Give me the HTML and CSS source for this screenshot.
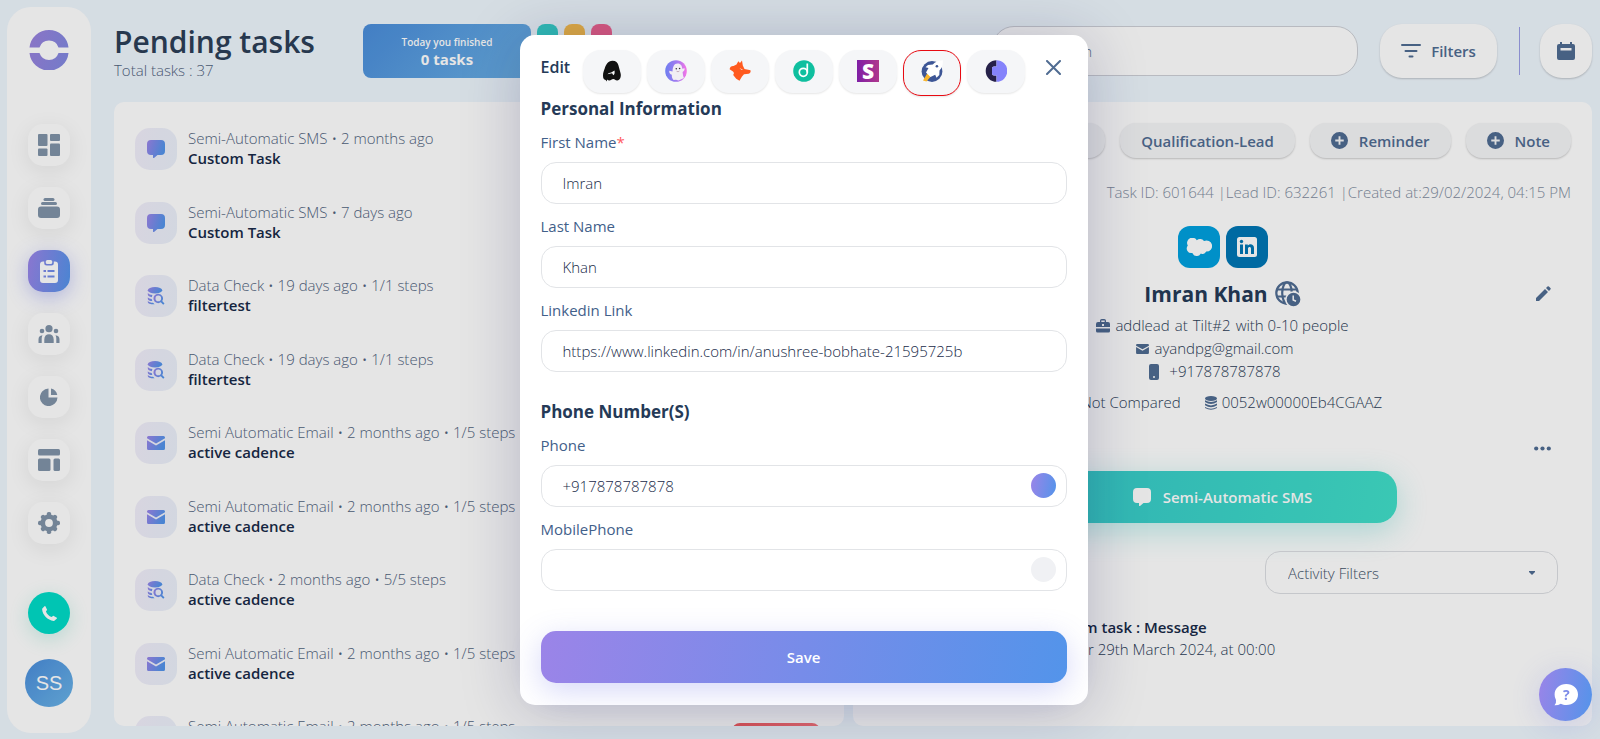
FILE: index.html
```html
<!DOCTYPE html>
<html lang="en">

<head>
  <title>Pending tasks</title>
  <meta charset="utf-8">
  <meta name="viewport" content="width=device-width, initial-scale=1">
  <link rel="stylesheet" href="styles.css">
</head>

<body>
  <!-- shared icons -->
  <svg class="sprite" width="0" height="0" aria-hidden="true">
    <defs>
      <linearGradient id="purple" x1="0" y1="0" x2="1" y2="0.3">
        <stop offset="0" stop-color="#9b84e8" />
        <stop offset="1" stop-color="#5394ea" />
      </linearGradient>
      <linearGradient id="ring" x1="0" y1="0" x2="1" y2="0.3">
        <stop offset="0" stop-color="#9b82dd" />
        <stop offset="1" stop-color="#8488e0" />
      </linearGradient>
      <symbol id="i-chat" viewBox="0 0 18 18">
        <path d="M4 0h10a4 4 0 0 1 4 4v7a4 4 0 0 1-4 4h-3.500L7 18q-1 .4-1-.8V15H4a4 4 0 0 1-4-4V4a4 4 0 0 1 4-4z" />
      </symbol>
      <symbol id="i-mail" viewBox="0 0 18 14">
        <path d="M1.500 0h15A1.500 1.500 0 0 1 18 1.500v.8L9 7.500 0 2.300v-.8A1.500 1.500 0 0 1 1.500 0zM0 4.300l9 5.200 9-5.200v8.200a1.500 1.500 0 0 1-1.500 1.500h-15A1.500 1.500 0 0 1 0 12.500z" />
      </symbol>
      <symbol id="i-data" viewBox="0 0 18 18">
        <ellipse cx="8" cy="3.200" rx="7.200" ry="3.200" />
        <path d="M.8 6c1 1.200 2.600 1.800 4.600 2.100l-.6 2.100C2.600 9.900.8 9 .8 7.600zM.8 10.200c.9 1 2.300 1.600 3.900 1.800l.6 2.100C2.700 14 .8 13 .8 11.700zM.8 14c1.200 1.200 3 1.700 5.200 1.800l1.600 1.500C3.800 17.400.8 16.700.8 15z" />
        <path fill-rule="evenodd" d="M11.300 6.700a4.700 4.700 0 0 1 3.900 7.300l2.300 2.400-1.300 1.300-2.400-2.400a4.700 4.700 0 1 1-2.500-8.600zm0 1.900a2.800 2.800 0 1 0 0 5.600 2.800 2.800 0 0 0 0-5.600z" />
      </symbol>
      <symbol id="i-plus" viewBox="0 0 18 18">
        <path fill-rule="evenodd" d="M9 0a9 9 0 1 1 0 18A9 9 0 0 1 9 0zM8 4.500V8H4.500v2H8v3.500h2V10h3.500V8H10V4.500z" />
      </symbol>
    </defs>
  </svg>

  <div class="app">
    <nav class="sidebar">
      <svg class="logo" viewBox="0 0 40 40">
        <path d="M.5 18a19.600 19.600 0 0 1 39 0H29.500a10 10 0 0 0-19 0zM.5 23.500h10a10 10 0 0 0 19 0h10a19.600 19.600 0 0 1-39 0z" />
      </svg>
      <ul class="menu">
        <li><a class="menu-item" href="#" aria-label="Dashboard"><svg width="22" height="22" viewBox="0 0 22 22">
              <rect width="9.500" height="12" rx="1" />
              <rect x="12" width="10" height="7" rx="1" />
              <rect y="14.500" width="9.500" height="7.500" rx="1" />
              <rect x="12" y="9.500" width="10" height="12.500" rx="1" />
            </svg></a></li>
        <li><a class="menu-item" href="#" aria-label="Cadences"><svg width="22" height="20" viewBox="0 0 22 20">
              <rect x="5.500" width="11" height="3" rx="1.500" />
              <rect x="3" y="4" width="16" height="3" rx="1.500" />
              <rect y="8.500" width="22" height="11.500" rx="3" />
            </svg></a></li>
        <li><a class="menu-item active" href="#" aria-label="Tasks"><svg width="18" height="24" viewBox="0 0 18 24">
              <path fill-rule="evenodd" d="M3 2.500h1.200V4a2.500 2.500 0 0 0 2.500 2.500h4.600A2.500 2.500 0 0 0 13.800 4V2.500H15a3 3 0 0 1 3 3V21a3 3 0 0 1-3 3H3a3 3 0 0 1-3-3V5.500a3 3 0 0 1 3-3zM3.500 11v2H6v-2zm4 0v2h7v-2zm-4 5.500v2H6v-2zm4 0v2h7v-2z" />
              <rect x="5.800" y="1" width="6.400" height="4" rx="1.500" />
            </svg></a></li>
        <li><a class="menu-item" href="#" aria-label="People"><svg width="22" height="18" viewBox="0 0 22 18">
              <circle cx="11" cy="3.700" r="3.600" />
              <circle cx="4" cy="6" r="2.300" />
              <circle cx="18" cy="6" r="2.300" />
              <path d="M6.300 18v-3.500C6.300 11 8.300 9.300 11 9.300s4.700 1.700 4.700 5.200V18zM.5 18v-3.500c0-2.300 1.200-4 4-4.200-.7 1.300-.8 2.500-.8 4.200V18zM21.500 18v-3.500c0-2.300-1.200-4-4-4.200.7 1.300.8 2.500.8 4.200V18z" />
            </svg></a></li>
        <li><a class="menu-item" href="#" aria-label="Statistics"><svg width="18" height="18" viewBox="0 0 18 18">
              <path d="M8.500.5V9.500H17.500A8.800 8.800 0 1 1 8.500.5zM11 .6A8.500 8.500 0 0 1 17.300 7H11z" />
            </svg></a></li>
        <li><a class="menu-item" href="#" aria-label="Templates"><svg width="22" height="22" viewBox="0 0 22 22">
              <rect width="22" height="6.500" rx="1.500" />
              <rect y="9.500" width="12.500" height="12.500" rx="1.500" />
              <rect x="15.500" y="9.500" width="6.500" height="12.500" rx="1.500" />
            </svg></a></li>
        <li><a class="menu-item" href="#" aria-label="Settings"><svg width="22" height="22" viewBox="0 0 22 22">
              <rect x="8.800" width="4.400" height="22" rx="1.800" />
              <rect y="8.800" width="22" height="4.400" rx="1.800" />
              <rect x="8.800" y="0.500" width="4.400" height="21" rx="1.800" transform="rotate(45 11 11)" />
              <rect x="8.800" y="0.500" width="4.400" height="21" rx="1.800" transform="rotate(-45 11 11)" />
              <circle cx="11" cy="11" r="8.500" />
              <circle cx="11" cy="11" r="3.900" fill="#fff" />
            </svg></a></li>
      </ul>
      <button class="call" aria-label="Call"><svg width="15" height="15" viewBox="0 0 15 15">
          <path d="M.3 2.400 2.500.2q.5-.4.900.1L5 3.400q.3.500-.1.900L3.900 5.300c.8 2.600 3 4.900 5.800 5.800l1.200-1q.4-.4.900-.1l3 1.700q.5.300.1.800l-2.200 2.100q-.4.400-1 .3C5.500 14.200.6 9.300.1 3.300q0-.6.200-.9z" />
        </svg></button>
      <button class="avatar">SS</button>
    </nav>

    <div class="main">
      <header class="topbar">
        <div class="heading">
          <h1>Pending tasks</h1>
          <p>Total tasks : 37</p>
        </div>
        <div class="progress">
          <div class="finished">
            <span>Today you finished</span>
            <strong>0 tasks</strong>
          </div>
          <span class="chip teal"></span>
          <span class="chip yellow"></span>
          <span class="chip pink"></span>
        </div>
        <input class="search" type="search" placeholder="Search" aria-label="Search">
        <button class="filters"><svg width="20" height="14" viewBox="0 0 20 14">
            <path d="M1 1h18M4.500 7h11M8.500 12.500h3" stroke="currentColor" stroke-width="2" stroke-linecap="round" />
          </svg>Filters</button>
        <span class="divider"></span>
        <button class="calendar" aria-label="Calendar"><svg width="18" height="18" viewBox="0 0 18 18">
            <path fill-rule="evenodd" d="M3 0h2v2h8V0h2v2h1a2 2 0 0 1 2 2v12a2 2 0 0 1-2 2H2a2 2 0 0 1-2-2V4a2 2 0 0 1 2-2h1zM3.500 6v2.500h11V6z" />
          </svg></button>
      </header>

      <div class="panels">
        <section class="panel">
          <ul class="tasks">
            <li class="task">
              <span class="task-icon"><svg width="18" height="18"><use href="#i-chat" /></svg></span>
              <div><p>Semi-Automatic SMS • 2 months ago</p><strong>Custom Task</strong></div>
            </li>
            <li class="task">
              <span class="task-icon"><svg width="18" height="18"><use href="#i-chat" /></svg></span>
              <div><p>Semi-Automatic SMS • 7 days ago</p><strong>Custom Task</strong></div>
            </li>
            <li class="task">
              <span class="task-icon"><svg width="18" height="18"><use href="#i-data" /></svg></span>
              <div><p>Data Check • 19 days ago • 1/1 steps</p><strong>filtertest</strong></div>
            </li>
            <li class="task">
              <span class="task-icon"><svg width="18" height="18"><use href="#i-data" /></svg></span>
              <div><p>Data Check • 19 days ago • 1/1 steps</p><strong>filtertest</strong></div>
            </li>
            <li class="task">
              <span class="task-icon"><svg width="18" height="14"><use href="#i-mail" /></svg></span>
              <div><p>Semi Automatic Email • 2 months ago • 1/5 steps</p><strong>active cadence</strong></div>
            </li>
            <li class="task">
              <span class="task-icon"><svg width="18" height="14"><use href="#i-mail" /></svg></span>
              <div><p>Semi Automatic Email • 2 months ago • 1/5 steps</p><strong>active cadence</strong></div>
            </li>
            <li class="task">
              <span class="task-icon"><svg width="18" height="18"><use href="#i-data" /></svg></span>
              <div><p>Data Check • 2 months ago • 5/5 steps</p><strong>active cadence</strong></div>
            </li>
            <li class="task">
              <span class="task-icon"><svg width="18" height="14"><use href="#i-mail" /></svg></span>
              <div><p>Semi Automatic Email • 2 months ago • 1/5 steps</p><strong>active cadence</strong></div>
            </li>
            <li class="task">
              <span class="task-icon"><svg width="18" height="14"><use href="#i-mail" /></svg></span>
              <div><p>Semi Automatic Email • 2 months ago • 1/5 steps</p><strong>active cadence</strong></div>
              <span class="tag"></span>
            </li>
          </ul>
        </section>

        <section class="panel details">
          <div class="actions">
            <button>Skip</button>
            <button>Qualification-Lead</button>
            <button><svg width="17" height="17"><use href="#i-plus" /></svg>Reminder</button>
            <button><svg width="17" height="17"><use href="#i-plus" /></svg>Note</button>
          </div>
          <p class="meta">Task ID: 601644 |Lead ID: 632261 |Created at:29/02/2024, 04:15 PM</p>
          <div class="social">
            <a class="salesforce" href="#" aria-label="Salesforce"><svg width="26" height="18" viewBox="0 0 26 18">
                <path d="M10.800 2.200A5 5 0 0 1 18 3a5.600 5.600 0 1 1 2.200 10.600 4 4 0 0 1-5.300 1.800 4.700 4.700 0 0 1-8.600-.4A4.600 4.600 0 0 1 1.800 7.600 5 5 0 0 1 10.800 2.200z" />
              </svg></a>
            <a class="linkedin" href="#" aria-label="LinkedIn"><svg width="22" height="22" viewBox="0 0 22 22">
                <rect x="1" y="1" width="20" height="20" rx="2.500" />
                <circle class="cut" cx="5.500" cy="5.500" r="1.700" />
                <path class="cut" d="M4 8.500h3V18H4zM9 8.500h2.800v1.300c1.400-2.400 6.200-2 6.200 2.200v6h-3v-5.300c0-2.300-3-2-3 0V18H9z" />
              </svg></a>
          </div>
          <div class="name">
            <h2>Imran Khan
              <svg width="26" height="26" viewBox="0 0 26 26">
                <g fill="none" stroke="currentColor" stroke-width="2.200">
                  <circle cx="12" cy="12" r="10.700" />
                  <ellipse cx="12" cy="12" rx="4.800" ry="10.700" />
                  <path d="M2 8.500h20M2 15.500h20" />
                </g>
                <circle cx="18.500" cy="18.500" r="7.600" fill="currentColor" stroke="#fff" stroke-width="1.500" />
                <path d="M18.200 14.500v4.500l2.800 1.300" fill="none" stroke="#fff" stroke-width="1.500" />
              </svg>
            </h2>
            <button class="plain" aria-label="Edit lead"><svg width="16" height="16" viewBox="0 0 16 16">
                <path d="M1 12 10 3l3 3-9 9H1zM11 2l1.500-1.400a1 1 0 0 1 1.400 0l1.500 1.500a1 1 0 0 1 0 1.400L14 5z" />
              </svg></button>
          </div>
          <div class="contact">
            <p><svg width="14" height="14" viewBox="0 0 14 14">
                <path fill-rule="evenodd" d="M4 3V1.800A1.800 1.800 0 0 1 5.800 0h2.400A1.800 1.800 0 0 1 10 1.800V3h2a2 2 0 0 1 2 2v3H0V5a2 2 0 0 1 2-2zm1.300 0h3.400V1.400H5.300zM6 5v2h2V5zM0 9.500h14V12a1.500 1.500 0 0 1-1.500 1.500h-11A1.500 1.500 0 0 1 0 12z" />
              </svg><span>addlead</span><span>at</span><span>Tilt#2</span><span>with 0-10 people</span></p>
            <p class="short"><svg width="13" height="10" viewBox="0 0 18 14"><use href="#i-mail" /></svg><span>ayandpg@gmail.com</span></p>
            <p class="short phone"><svg width="10" height="16" viewBox="0 0 10 16">
                <path fill-rule="evenodd" d="M2 0h6a2 2 0 0 1 2 2v12a2 2 0 0 1-2 2H2a2 2 0 0 1-2-2V2a2 2 0 0 1 2-2zm3 12a1 1 0 1 0 0 2 1 1 0 0 0 0-2z" />
              </svg><span>+917878787878</span></p>
          </div>
          <div class="contact compare">
            <p><svg width="13" height="13" viewBox="0 0 14 14">
                <circle cx="7" cy="7" r="6" />
              </svg><span>Not Compared</span></p>
            <p><svg width="12" height="14" viewBox="0 0 12 14">
                <ellipse cx="6" cy="2.500" rx="6" ry="2.500" />
                <path d="M0 4.300q6 3.600 12 0V6q-6 4-12 0zM0 7.600q6 3.600 12 0v1.700q-6 4-12 0zM0 10.900q6 3.600 12 0V12q-6 3.600-12 0z" />
              </svg><span>0052w00000Eb4CGAAZ</span></p>
          </div>
          <button class="plain more" aria-label="More"><svg width="17" height="5" viewBox="0 0 17 5">
              <circle cx="2.200" cy="2.500" r="2.100" />
              <circle cx="8.500" cy="2.500" r="2.100" />
              <circle cx="14.800" cy="2.500" r="2.100" />
            </svg></button>
          <button class="sms"><svg width="18" height="18"><use href="#i-chat" /></svg>Semi-Automatic SMS</button>
          <select class="activity-filter" aria-label="Activity Filters">
            <option>Activity Filters</option>
          </select>
          <div class="activity">
            <strong>From Custom task : Message</strong>
            <p>Scheduled for 29th March 2024, at 00:00</p>
          </div>
        </section>
      </div>
    </div>
  </div>

  <div class="overlay">
    <form class="modal">
      <div class="modal-head">
        <h3>Edit</h3>
        <div class="tools">
          <button type="button" aria-label="Aircall"><svg viewBox="0 0 22 22">
              <path fill="#111" fill-rule="evenodd" d="M11.500 .8c3.400 0 5.300 2.100 5.900 4.500l2.100 7.700c1 3-.3 7.500-3.400 7.500-1.700 0-2.400-1.500-3.800-1.500-1.500 0-2.500 1.500-3.900 1.500-1 0-1.700-.3-2.200-1l-.6 2.100-.9-1.700C3 20 2 18.500 2 15.500c0-2.700.8-4.600 1.700-7C4.900 4.800 6.800.8 11.500.8zM6.500 14.300l4.600-1.100 1.200 2c1.300-.8 1.600-2.700 1.200-4.800l-3.300 2.200c-1.500.1-2.700.5-3.700 1.700z" />
            </svg></button>
          <button type="button" aria-label="Ghost"><svg viewBox="0 0 22 22">
              <defs>
                <linearGradient id="ghost" x1="0" y1="0" x2="1" y2="0">
                  <stop offset="0" stop-color="#6d7ef0" />
                  <stop offset=".6" stop-color="#a97af0" />
                  <stop offset="1" stop-color="#f774e6" />
                </linearGradient>
              </defs>
              <circle cx="11" cy="11" r="10.800" fill="url(#ghost)" />
              <path fill="#f1eef4" d="M12.500 3.500c3.200 0 4.600 2.300 4.800 5.300l2.300-.6c.2 1.800-.6 3-2 3.800.3 2.600.6 4.500 1.400 6l-3.300 1.400-2.200 1-2.500-.6-2.500.3c-1.500-2-1.700-3.300-1.700-5.300C5 14 4 12.800 4.300 10.700l3.200.7C7.800 7 9 3.500 12.500 3.500z" />
              <circle cx="11.300" cy="8.700" r=".8" fill="#333" />
              <circle cx="14.600" cy="8.500" r=".8" fill="#333" />
              <path d="M11.600 11.300q1.600 1 2.800-.3" fill="none" stroke="#b9a" stroke-width=".8" />
            </svg></button>
          <button type="button" aria-label="Fox"><svg viewBox="0 0 22 22">
              <path fill="#ff5a1f" fill-rule="evenodd" d="M7.500 4.500 9.300 1.200 11 3l2-2.500.8 5 1.700 3.500 6 1.200c.5 1.700-.4 3-1.800 3.500l-4.700.5-2 2.300-2.500 4.300-3.300-2-3-3.800.8-2L4 11.500.6 9.200C1 7 2.500 5.800 4.500 6zM10.500 8l1.800 1.700 2 .2z" />
            </svg></button>
          <button type="button" aria-label="Dropcontact"><svg viewBox="0 0 22 22">
              <circle cx="11" cy="11" r="10.800" fill="#0fbf9f" />
              <circle cx="10.300" cy="12.300" r="4" fill="none" stroke="#fff" stroke-width="1.700" />
              <path d="M14.300 3.500v9" stroke="#fff" stroke-width="1.700" />
            </svg></button>
          <button type="button" aria-label="Societe"><svg viewBox="0 0 22 22">
              <defs>
                <linearGradient id="plum" x1="0" y1="0" x2="1" y2="0">
                  <stop offset="0" stop-color="#7f1fa6" />
                  <stop offset="1" stop-color="#b0388c" />
                </linearGradient>
              </defs>
              <rect width="22" height="22" fill="url(#plum)" />
              <text x="11" y="18.500" text-anchor="middle" class="letter-s">S</text>
            </svg></button>
          <button type="button" class="selected" aria-label="Rocket"><svg viewBox="0 0 22 22">
              <circle cx="11" cy="11.500" r="10.400" fill="#3d5696" />
              <path d="M2 20.500 6.500 13l3.500 3.200L5.500 21.500z" fill="#f9b62c" />
              <path d="M21.800.2c.2 4.500-.8 7.800-3.300 10.300l-.2 4.500-2.800 2.700-1.300-3-4.700 2.300L5 12.500l2.500-4.500-3-.7L7 5l4.800-.6C14 2 17.500.5 21.800.2z" fill="#fff" />
              <circle cx="15.900" cy="6.200" r="1.300" fill="#3d5696" />
            </svg></button>
          <button type="button" aria-label="Cognism"><svg viewBox="0 0 22 22">
              <path fill="#262149" d="M11.500.2v6.300H9a2 2 0 0 0-2 2v5a2 2 0 0 0 2 2h2.500v6.300A10.800 10.800 0 0 1 11.500.2z" />
              <path fill="#8583fb" d="M11.500.2a10.800 10.800 0 0 1 0 21.600V15.500H9a2 2 0 0 1-2-2v-5a2 2 0 0 1 2-2h2.500z" />
            </svg></button>
        </div>
        <button type="button" class="close" aria-label="Close"><svg width="15" height="15" viewBox="0 0 15 15">
            <path d="m1 1 13 13M14 1 1 14" stroke="currentColor" stroke-width="2" stroke-linecap="round" />
          </svg></button>
      </div>

      <h3 class="section-title">Personal Information</h3>
      <label for="first">First Name<span class="required">*</span></label>
      <div class="field"><input type="text" id="first" value="Imran"></div>
      <label for="last">Last Name</label>
      <div class="field"><input type="text" id="last" value="Khan"></div>
      <label for="link">Linkedin Link</label>
      <div class="field"><input type="text" id="link" value="https://www.linkedin.com/in/anushree-bobhate-21595725b"></div>

      <h3 class="section-title second">Phone Number(S)</h3>
      <label for="phone">Phone</label>
      <div class="field">
        <input type="text" id="phone" value="+917878787878">
        <input type="radio" name="primary" aria-label="Use Phone" checked>
      </div>
      <label for="mobile">MobilePhone</label>
      <div class="field">
        <input type="text" id="mobile">
        <input type="radio" name="primary" aria-label="Use MobilePhone">
      </div>
      <button type="button" class="save">Save</button>
    </form>
  </div>

  <button class="help" aria-label="Help"><svg width="24" height="22" viewBox="0 0 24 22">
      <path d="M12.300 0C19 0 24 4.500 24 10.500S19 21 12.300 21c-2 0-4-.4-5.500-1.200Q4 21.500.5 21.300 2.500 19 2 16A10 10 0 0 1 .6 10.500C.6 4.500 5.600 0 12.300 0z" />
      <text x="12.300" y="16" text-anchor="middle">?</text>
    </svg></button>
</body>

</html>
```
FILE: styles.css
```css
* {
  box-sizing: border-box;
}

body {
  margin: 0;
  background-color: #eef6fd;
  font-family: "Open Sans", sans-serif;
  font-size: 15px;
  font-weight: 300;
  color: #253a57;
  overflow: hidden;
}

h1,
h2,
h3,
p,
ul {
  margin: 0;
  padding: 0;
}

ul {
  list-style: none;
}

button,
input,
select {
  font-family: inherit;
  font-size: 15px;
}

button {
  display: flex;
  align-items: center;
  justify-content: center;
  border: none;
  padding: 0;
  cursor: pointer;
}

svg {
  display: block;
  flex: none;
  fill: currentColor;
}

.sprite {
  position: absolute;
}

.app {
  display: flex;
  height: 100vh;
}

/* left navigation */
.sidebar {
  width: 84px;
  flex: none;
  margin: 7px 0 6px 7px;
  padding: 22px 0 26px;
  display: flex;
  flex-direction: column;
  align-items: center;
  background-color: white;
  border-radius: 24px;
}

.logo {
  width: 40px;
  height: 41px;
  fill: url(#ring);
}

.menu {
  margin-top: 54px;
  display: flex;
  flex-direction: column;
  gap: 21px;
}

.menu-item {
  width: 42px;
  height: 42px;
  display: flex;
  align-items: center;
  justify-content: center;
  border-radius: 15px;
  background-color: white;
  color: #8194a9;
  box-shadow: 0 5px 22px rgba(0, 0, 0, .08);
}

.menu-item.active {
  color: white;
  background: linear-gradient(100deg, #9b84e8, #5394ea);
  box-shadow: 0 5px 20px rgba(90, 100, 230, .35);
}

.call {
  width: 42px;
  height: 42px;
  margin-top: auto;
  border-radius: 50%;
  color: white;
  background-color: #00dcc8;
  box-shadow: 0 5px 20px rgba(0, 190, 150, .2);
}

.avatar {
  width: 48px;
  height: 48px;
  margin-top: 25px;
  border-radius: 50%;
  font-family: "Liberation Sans", sans-serif;
  font-size: 20px;
  color: white;
  background: linear-gradient(135deg, #4a8ddb, #6ab4e8);
}

.main {
  flex: 1;
  min-width: 0;
  display: flex;
  flex-direction: column;
  gap: 24px;
  padding: 24px 8px 13px 23px;
}

/* top bar */
.topbar {
  display: flex;
  align-items: center;
  height: 54px;
}

.heading {
  width: 249px;
  padding-top: 2px;
}

.heading h1 {
  font-size: 30px;
  line-height: 36px;
  font-weight: 600;
  color: #2c3f57;
}

.heading p {
  line-height: 20px;
  color: #51637e;
}

.progress {
  display: flex;
  gap: 6px;
}

.finished {
  width: 168px;
  height: 54px;
  display: flex;
  flex-direction: column;
  align-items: center;
  justify-content: center;
  border-radius: 8px;
  color: white;
  background: linear-gradient(135deg, #4a8ddb, #6ab0e4);
}

.finished span {
  font-size: 10px;
  line-height: 16px;
  font-weight: 600;
}

.finished strong {
  line-height: 18px;
  font-weight: 700;
}

.chip {
  width: 21px;
  height: 54px;
  border-radius: 8px;
}

.teal {
  background-color: #36cfc9;
}

.yellow {
  background-color: #f7bd4c;
}

.pink {
  background-color: #f0648f;
}

.search {
  width: 366px;
  height: 50px;
  margin-left: auto;
  padding: 0 20px 0 53px;
  border: 1px solid #cdd0d6;
  border-radius: 22px;
  background-color: white;
  font-weight: 300;
}

.search::placeholder {
  color: #60728d;
}

.filters,
.calendar {
  height: 54px;
  border-radius: 22px;
  color: #506c92;
  background-color: white;
  box-shadow: 0 1px 2px rgba(0, 0, 0, .2);
}

.filters {
  width: 117px;
  margin-left: 22px;
  gap: 10px;
  font-weight: 600;
}

.divider {
  width: 1px;
  height: 48px;
  margin: 0 20px 0 22px;
  background-color: #9a9ee6;
}

.calendar {
  width: 52px;
}

/* panels */
.panels {
  flex: 1;
  min-height: 0;
  display: grid;
  grid-template-columns: 730fr 739fr;
  gap: 9px;
}

.panel {
  min-width: 0;
  overflow: hidden;
  border-radius: 10px;
  background-color: white;
}

.tasks {
  height: 630px;
  margin: 26px 24px 0 21px;
  display: flex;
  flex-direction: column;
  justify-content: space-between;
}

.task {
  height: 42px;
  display: flex;
  align-items: center;
  gap: 11px;
  color: #51637e;
}

.task-icon {
  width: 42px;
  height: 42px;
  display: flex;
  align-items: center;
  justify-content: center;
  border-radius: 15px;
  background: linear-gradient(100deg, #f1eefa, #eaf0fa);
}

.task-icon svg {
  fill: url(#purple);
}

.task div {
  padding-bottom: 2px;
}

.task p,
.task strong {
  display: block;
  line-height: 20px;
}

.task strong,
.activity strong {
  font-weight: 600;
  color: #182a48;
}

.tag {
  width: 88px;
  height: 28px;
  margin-left: auto;
  border-radius: 8px;
  background: linear-gradient(100deg, #ef5a5e, #f5747b);
}

/* lead details */
.details {
  padding: 21px;
  display: flex;
  flex-direction: column;
}

.actions {
  display: flex;
  justify-content: flex-end;
  gap: 15px;
}

.actions button {
  height: 35px;
  padding: 0 21px;
  gap: 11px;
  border-radius: 16px;
  font-weight: 600;
  color: #506c92;
  background-color: #f4f5f7;
  box-shadow: 0 1px 2px rgba(0, 0, 0, .2);
}

.meta {
  margin-top: 24px;
  line-height: 20px;
  text-align: right;
  color: #7f8da0;
}

.social {
  display: flex;
  justify-content: center;
  gap: 6px;
  margin-top: 24px;
}

.social a {
  width: 42px;
  height: 42px;
  display: flex;
  align-items: center;
  justify-content: center;
  border-radius: 12px;
  color: white;
}

.salesforce {
  background-color: #00a1df;
}

.linkedin {
  background-color: #0077b5;
}

.linkedin .cut {
  fill: #0077b5;
}

.name {
  display: grid;
  grid-template-columns: 1fr auto 1fr;
  align-items: center;
  margin-top: 13px;
}

.name h2 {
  grid-column: 2;
  display: flex;
  align-items: center;
  gap: 7px;
  font-size: 21px;
  line-height: 26px;
  font-weight: 700;
  color: #253a57;
}

.name svg,
.contact svg,
.plain {
  color: #506c92;
}

.plain {
  background: none;
}

.name .plain {
  justify-self: end;
  margin-right: 20px;
}

.contact {
  margin-top: 7px;
  line-height: 23px;
  color: #2c3d57;
}

.contact p {
  display: flex;
  align-items: center;
  justify-content: center;
  gap: 5px;
}

.contact .short {
  padding-right: 15px;
}

.contact .phone {
  gap: 10px;
}

.compare {
  display: flex;
  justify-content: center;
  gap: 24px;
  margin-top: 8px;
}

.more {
  align-self: flex-end;
  height: 16px;
  margin: 26px 20px 0 0;
}

.sms {
  align-self: center;
  width: 348px;
  height: 52px;
  gap: 12px;
  margin-top: 15px;
  border-radius: 20px;
  font-weight: 600;
  color: white;
  background: linear-gradient(100deg, #36c9c9, #41dfc9);
  box-shadow: 0 8px 30px rgba(40, 200, 190, .3);
}

.activity-filter {
  align-self: flex-end;
  width: 293px;
  height: 43px;
  margin: 28px 13px 0 0;
  padding: 0 22px;
  border: 1px solid #dcdee2;
  border-radius: 15px;
  appearance: none;
  font-weight: 300;
  color: #435269;
  background: url("data:image/svg+xml,%3Csvg xmlns='http://www.w3.org/2000/svg' width='6' height='4'%3E%3Cpath d='M0 0h6v1L3 4 0 1z' fill='%23506c92'/%3E%3C/svg%3E") no-repeat right 22px center;
}

.activity {
  margin: 22px 0 0 126px;
  line-height: 22px;
  color: #2c3d57;
}

/* edit dialog, over the dimmed page */
.overlay {
  position: absolute;
  inset: 0;
  display: flex;
  align-items: center;
  justify-content: center;
  padding-left: 7px;
  background-color: rgba(0, 0, 0, .1);
}

.modal {
  width: 568px;
  padding: 15px 21px 22px;
  border-radius: 15px;
  background-color: white;
  box-shadow: 0 5px 60px rgba(20, 20, 80, .22);
}

.modal h3 {
  font-size: 16px;
  line-height: 24px;
  font-weight: 600;
}

.modal-head {
  display: flex;
  align-items: flex-start;
  height: 47px;
}

.modal-head h3 {
  width: 42px;
  margin-top: 5px;
}

.tools {
  display: flex;
  gap: 6px;
}

.tools button {
  width: 58px;
  height: 43px;
  border-radius: 18px;
  background-color: #f5f6f8;
  box-shadow: 0 1px 2px rgba(0, 0, 0, .1);
}

.tools svg {
  width: 22px;
  height: 22px;
}

.tools .selected {
  height: 46px;
  padding-bottom: 3px;
  border: 1px solid #e80a12;
}

.letter-s {
  font-size: 21px;
  font-weight: 800;
  fill: white;
}

.close {
  margin: 9px 5px 0 auto;
  padding: 1px;
  color: #506c92;
  background: none;
}

.modal .section-title {
  font-size: 17px;
  font-weight: 700;
}

.modal .second {
  margin-top: 28px;
}

.modal label {
  display: block;
  margin: 11px 0 9px;
  line-height: 22px;
  font-weight: 400;
  color: #42608a;
}

.modal h3 + label {
  margin-top: 10px;
}

.required {
  color: #ff5a5f;
}

.field {
  height: 42px;
  display: flex;
  align-items: center;
  padding: 0 10px 0 21px;
  border: 1px solid #e2e4e7;
  border-radius: 15px;
}

.field input[type="text"] {
  flex: 1;
  min-width: 0;
  padding: 0;
  border: none;
  outline: none;
  background: none;
  font-weight: 300;
  color: #182a48;
}

.field input[type="radio"] {
  appearance: none;
  width: 25px;
  height: 25px;
  margin: 0;
  border-radius: 50%;
  background-color: #f0f1f4;
}

.field input[type="radio"]:checked {
  background: linear-gradient(100deg, #9b84e8, #5394ea);
}

.save {
  width: 100%;
  height: 52px;
  margin-top: 40px;
  border-radius: 15px;
  font-weight: 600;
  color: white;
  background: linear-gradient(100deg, #9b84e8, #5394ea);
  box-shadow: 0 8px 30px rgba(90, 100, 230, .25);
}

.help {
  position: fixed;
  right: 8px;
  bottom: 18px;
  width: 53px;
  height: 53px;
  border-radius: 50%;
  color: white;
  background: linear-gradient(100deg, #9b84e8, #5394ea);
  box-shadow: 0 5px 30px rgba(90, 100, 230, .2);
}

.help text {
  font-size: 14px;
  font-weight: 700;
  fill: #7d8ce8;
}
```
